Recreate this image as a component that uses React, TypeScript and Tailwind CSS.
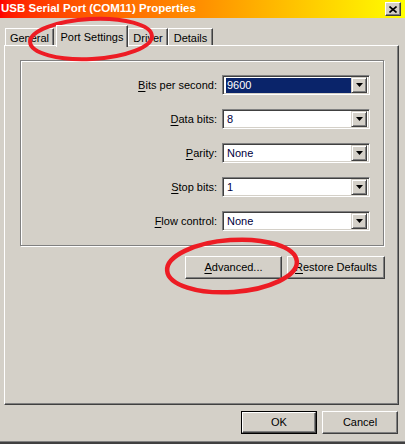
import type { ReactNode } from "react";

const FONT = { fontFamily: '"Liberation Sans", Arial, sans-serif' };

// access-key underline
function Key({ k, rest }: { k: string; rest: string }) {
  return (
    <>
      <span className="underline underline-offset-2">{k}</span>
      {rest}
    </>
  );
}

function Tab({ children, active, className }: { children: ReactNode; active?: boolean; className: string }) {
  return (
    <div
      className={
        "flex items-start justify-center border-t border-l border-r border-t-white border-l-white border-r-[#404040] shadow-[inset_-1px_0_0_#808080] bg-[#d4d0c8] text-[11px] text-black " +
        (active ? "relative z-10 -mb-[2px] h-[22px] pt-[3px] " : "h-[17px] pt-[1px] ") +
        className
      }
    >
      {children}
    </div>
  );
}

function Combo({ value, selected, label }: { value: string; selected?: boolean; label: ReactNode }) {
  return (
    <div className="flex items-center h-[20px]">
      <div className="flex-1 text-right pr-[5px] text-[11px] text-black">{label}</div>
      <div className="flex w-[148px] h-[20px] border-t border-l border-b border-r border-t-[#808080] border-l-[#808080] border-b-white border-r-white shadow-[inset_1px_1px_0_#404040,inset_-1px_-1px_0_#d4d0c8] bg-white p-[2px]">
        <div className="flex-1 flex items-center pl-[1px]">
          {selected ? (
            <div className="w-full h-[15px] bg-[#0a246a] text-white text-[11px] leading-[15px] pl-[1px]">{value}</div>
          ) : (
            <div className="text-[11px] text-[#000040] pl-[1px]">{value}</div>
          )}
        </div>
        <div className="w-[16px] h-[16px] -mt-[1px] flex items-center justify-center bg-[#d4d0c8] border-t border-l border-r border-b border-t-[#d4d0c8] border-l-[#d4d0c8] border-r-[#404040] border-b-[#404040] shadow-[inset_1px_1px_0_#fff,inset_-1px_-1px_0_#808080]">
          <svg width="7" height="4" viewBox="0 0 7 4">
            <path d="M0 0h7L3.5 4z" fill="#000" />
          </svg>
        </div>
      </div>
    </div>
  );
}

function Button({ children, isDefault, className }: { children: ReactNode; isDefault?: boolean; className: string }) {
  const inner = (
    <div className="w-full h-full flex items-center justify-center bg-[#d4d0c8] border-t border-l border-r border-b border-t-white border-l-white border-r-[#404040] border-b-[#404040] shadow-[inset_-1px_-1px_0_#808080] text-[11px] text-black">
      {children}
    </div>
  );
  return isDefault ? (
    <div className={"border border-black " + className}>{inner}</div>
  ) : (
    <div className={className}>{inner}</div>
  );
}

export default function App() {
  return (
    <div className="relative w-[405px] h-[444px] overflow-hidden bg-[#d4d0c8] flex flex-col" style={FONT}>
      {/* title bar */}
      <div className="h-[18px] flex items-center justify-between bg-gradient-to-r from-[#ff0000] via-[#ff9000] to-[#ffff00] pl-[1px] pr-[4px]">
        <span className="text-white font-bold text-[11.5px] leading-none">USB Serial Port (COM11) Properties</span>
        <div className="w-[16px] h-[14px] flex items-center justify-center bg-[#d4d0c8] border-t border-l border-r border-b border-t-white border-l-white border-r-[#404040] border-b-[#404040] shadow-[inset_-1px_-1px_0_#808080]">
          <svg width="8" height="7" viewBox="0 0 8 7">
            <path d="M0.5 0.5l7 6M7.5 0.5l-7 6" stroke="#000" strokeWidth="1.6" />
          </svg>
        </div>
      </div>

      {/* tabs */}
      <div className="flex items-end pl-[5px] h-[27px]">
        <Tab className="w-[49px]">General</Tab>
        <Tab active className="w-[72px] ml-[2px]">Port Settings</Tab>
        <Tab className="w-[40px]">Driver</Tab>
        <Tab className="w-[45px]">Details</Tab>
      </div>

      {/* tab page */}
      <div className="mx-[4px] w-[395px] h-[360px] border-t border-l border-r border-b border-t-white border-l-white border-r-[#404040] border-b-[#404040] shadow-[inset_-1px_-1px_0_#808080] pt-[14px] pl-[15px]">
        <div className="w-[364px] h-[186px] border border-[#808080] shadow-[1px_1px_0_#fff,inset_1px_1px_0_#fff] pt-[14px] pr-[13px] flex flex-col gap-[14px]">
          <Combo label={<Key k="B" rest="its per second:" />} value="9600" selected />
          <Combo label={<Key k="D" rest="ata bits:" />} value="8" />
          <Combo label={<Key k="P" rest="arity:" />} value="None" />
          <Combo label={<Key k="S" rest="top bits:" />} value="1" />
          <Combo label={<Key k="F" rest="low control:" />} value="None" />
        </div>
        <div className="flex gap-[5px] mt-[10px] pl-[165px]">
          <Button className="w-[97px] h-[23px]">
            <Key k="A" rest="dvanced..." />
          </Button>
          <Button className="w-[98px] h-[23px]">
            <Key k="R" rest="estore Defaults" />
          </Button>
        </div>
      </div>

      {/* dialog buttons */}
      <div className="flex justify-end gap-[5px] pr-[7px] mt-[6px]">
        <Button isDefault className="w-[76px] h-[23px]">OK</Button>
        <Button className="w-[76px] h-[23px]">Cancel</Button>
      </div>

      <div className="mt-auto h-[3px] border-t border-[#808080] bg-[#404040]" />

      {/* red annotations */}
      <svg className="absolute inset-0 pointer-events-none" width="405" height="444" viewBox="0 0 405 444">
        <ellipse cx="91" cy="39" rx="61" ry="20" fill="none" stroke="#ed1c24" strokeWidth="4" transform="rotate(-3 91 39)" />
        <ellipse cx="232" cy="266" rx="65" ry="26" fill="none" stroke="#ed1c24" strokeWidth="4.5" transform="rotate(-4 232 266)" />
      </svg>
    </div>
  );
}
